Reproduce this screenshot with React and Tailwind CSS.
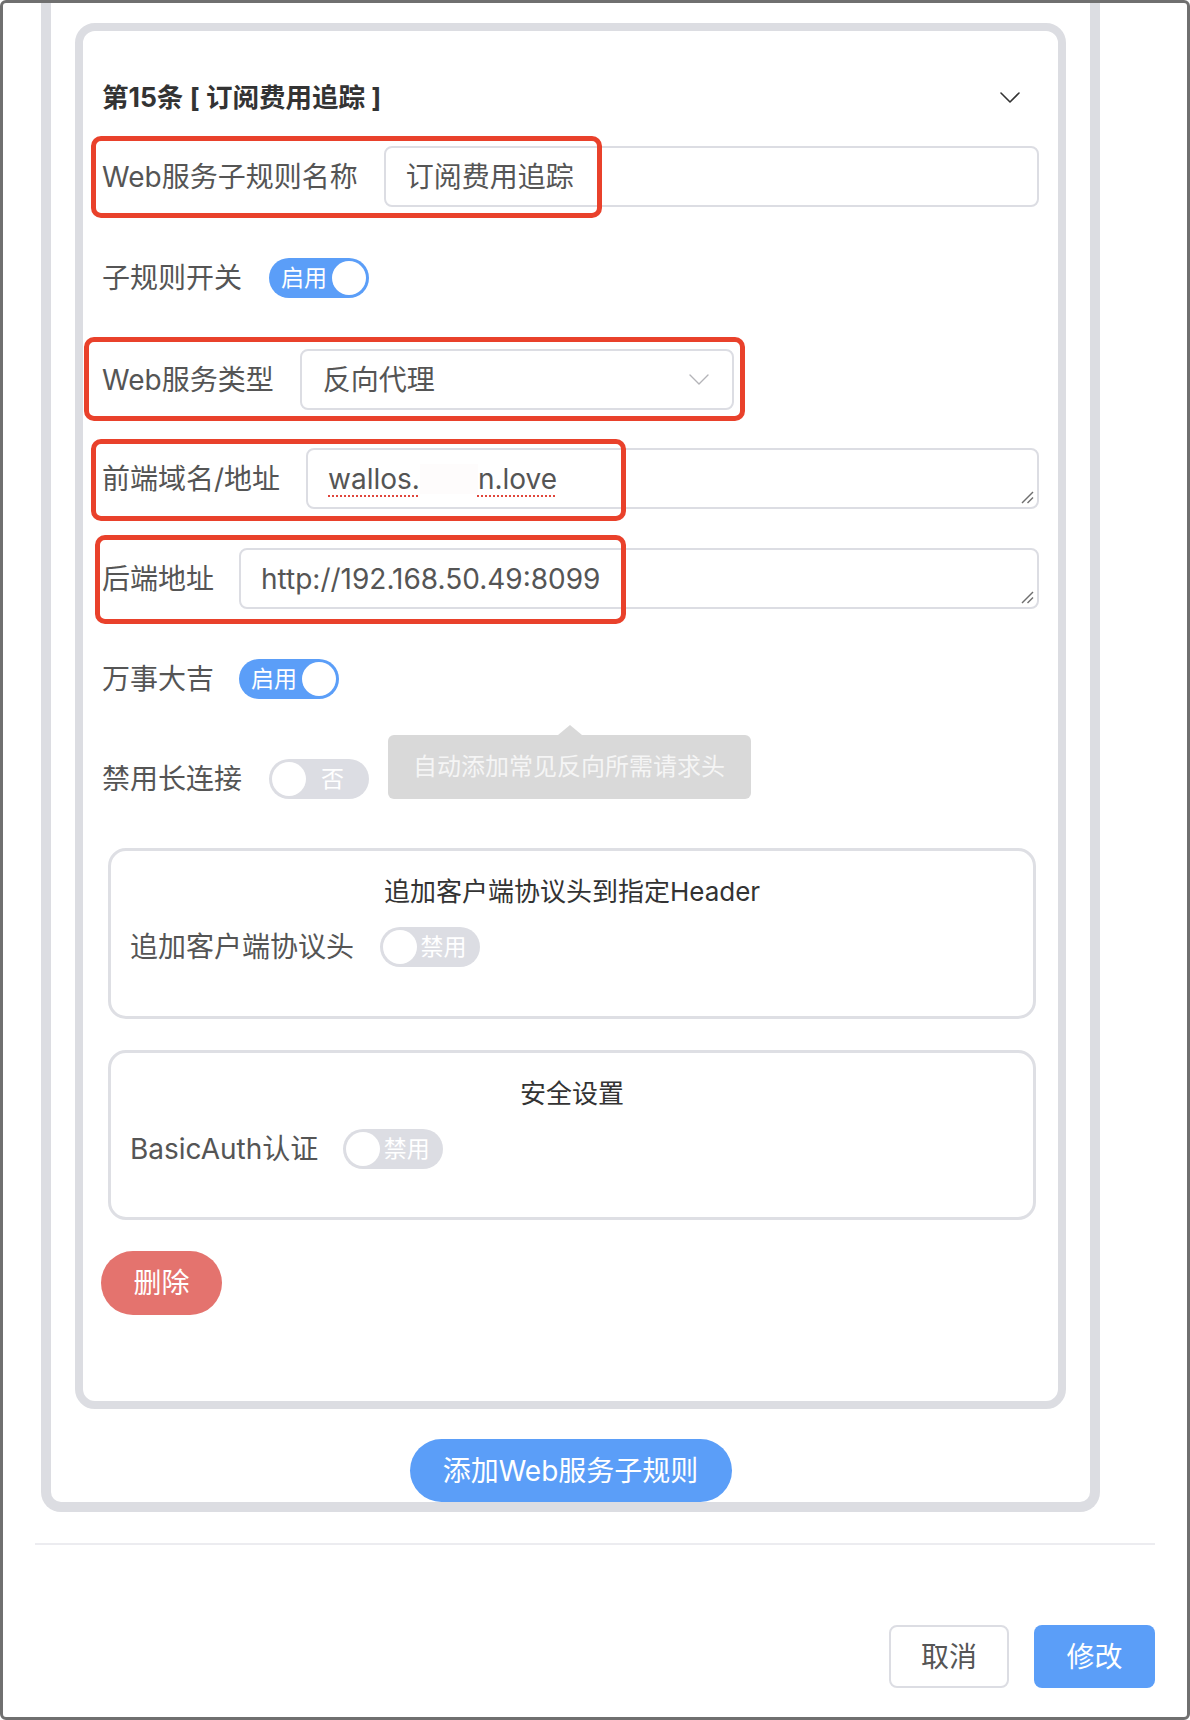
import React from "react";

function Chevron({ color = "#333", w = 20, h = 11, sw = 1.6 }) {
  return (
    <svg width={w} height={h} viewBox="0 0 20 11" fill="none">
      <polyline points="1,1 10,10 19,1" stroke={color} strokeWidth={sw} strokeLinecap="round" strokeLinejoin="round" />
    </svg>
  );
}

function Grip() {
  return (
    <svg className="absolute bottom-[3px] right-[3px]" width="13" height="13" viewBox="0 0 13 13" fill="none">
      <line x1="1" y1="12" x2="12" y2="1" stroke="#6f6f6f" strokeWidth="1.4" />
      <line x1="6.5" y1="12" x2="12" y2="6.5" stroke="#6f6f6f" strokeWidth="1.4" />
    </svg>
  );
}

function Toggle({ on, text }) {
  if (on) {
    return (
      <div className="flex h-[40px] w-[100px] shrink-0 items-center rounded-full bg-[#5b9ef8] p-[3px]">
        <span className="flex-1 pl-[4px] text-center text-[23px] leading-none text-white">{text}</span>
        <span className="h-[34px] w-[34px] rounded-full bg-white" />
      </div>
    );
  }
  return (
    <div className="flex h-[40px] w-[100px] shrink-0 items-center rounded-full bg-[#dcdde3] p-[3px]">
      <span className="h-[34px] w-[34px] rounded-full bg-white" />
      <span className="flex-1 pr-[7px] text-center text-[23px] leading-none text-white">{text}</span>
    </div>
  );
}

function Label({ children }) {
  return <span className="shrink-0 whitespace-nowrap text-[28px] leading-[40px] text-[#555]">{children}</span>;
}

function RedBox({ className }) {
  return <div className={"pointer-events-none absolute z-10 rounded-[10px] border-[5px] border-[#e9412b] " + className} />;
}

export default function App() {
  return (
    <div className="h-[1720px] w-[1190px] overflow-hidden rounded-[6px] border-[3px] border-[#707070] bg-white font-[family-name:Inter,'Noto_Sans_CJK_SC',sans-serif]">
      <div className="ml-[38px] w-[1059px] rounded-b-[20px] border-x-[10px] border-b-[10px] border-[#dcdde2] px-[24px] pt-[20px]">
        <div className="rounded-[20px] border-[8px] border-[#dcdde2] px-[19px] pb-[86px] pt-[46px]">
          {/* header */}
          <div className="flex h-[40px] items-center justify-between pr-[19px]">
            <span className="text-[26.5px] font-bold leading-none text-[#333]">第15条 [ 订阅费用追踪 ]</span>
            <Chevron />
          </div>

          {/* row 1 */}
          <div className="relative mt-[29px] flex items-center gap-[26px]">
            <RedBox className="-left-[11px] -top-[10px] h-[82px] w-[511px]" />
            <Label>Web服务子规则名称</Label>
            <div className="flex h-[61px] flex-1 items-center rounded-[8px] border-2 border-[#dcdde3] px-[20px] text-[28px] text-[#555]">
              订阅费用追踪
            </div>
          </div>

          {/* row 2 */}
          <div className="mt-[51px] flex h-[40px] items-center gap-[27px]">
            <Label>子规则开关</Label>
            <Toggle on text="启用" />
          </div>

          {/* row 3 */}
          <div className="relative mt-[51px] flex items-center gap-[26px]">
            <RedBox className="-left-[18px] -top-[12px] h-[84px] w-[661px]" />
            <Label>Web服务类型</Label>
            <div className="flex h-[61px] w-[434px] items-center justify-between rounded-[8px] border-2 border-[#dcdde3] pl-[21px] pr-[23px] text-[28px] text-[#555]">
              <span>反向代理</span>
              <Chevron color="#b4b4b8" sw={1.4} />
            </div>
          </div>

          {/* row 4 */}
          <div className="relative mt-[38px] flex items-center gap-[26px]">
            <RedBox className="-left-[11px] -top-[9px] h-[82px] w-[535px]" />
            <Label>前端域名/地址</Label>
            <div className="relative flex h-[61px] flex-1 items-center rounded-[8px] border-2 border-[#dcdde3] px-[20px] text-[28px] text-[#555]">
              <span className="underline decoration-[#e0463c] decoration-dotted decoration-2 underline-offset-[7px]">wallos.</span>
              <span className="inline-block h-[30px] w-[58px] bg-[#fefcfc]" />
              <span className="underline decoration-[#e0463c] decoration-dotted decoration-2 underline-offset-[7px]">n.love</span>
              <Grip />
            </div>
          </div>

          {/* row 5 */}
          <div className="relative mt-[39px] flex items-center gap-[25px]">
            <RedBox className="-left-[7px] -top-[13px] h-[89px] w-[531px]" />
            <Label>后端地址</Label>
            <div className="relative flex h-[61px] flex-1 items-center rounded-[8px] border-2 border-[#dcdde3] px-[20px] text-[28px] text-[#555]">
              http://192.168.50.49:8099
              <Grip />
            </div>
          </div>

          {/* row 6 */}
          <div className="mt-[50px] flex h-[40px] items-center gap-[25px]">
            <Label>万事大吉</Label>
            <Toggle on text="启用" />
          </div>

          {/* row 7 */}
          <div className="mt-[36px] flex items-end">
            <div className="flex h-[40px] items-center gap-[27px]">
              <Label>禁用长连接</Label>
              <Toggle text="否" />
            </div>
            <div className="relative ml-[19px] flex h-[64px] items-center rounded-[6px] bg-[#d9d9d9] pl-[25px] pr-[26px] text-[24px] text-[#f5f5f5]">
              <span className="absolute -top-[10px] left-[170px] h-0 w-0 border-x-[12px] border-b-[10px] border-x-transparent border-b-[#d9d9d9]" />
              自动添加常见反向所需请求头
            </div>
          </div>

          {/* box A */}
          <div className="ml-[6px] mr-[3px] mt-[49px] h-[171px] rounded-[18px] border-[3px] border-[#dedfe4] pt-[24px]">
            <div className="text-center text-[26px] leading-[34px] text-[#333]">追加客户端协议头到指定Header</div>
            <div className="mt-[18px] flex h-[40px] items-center gap-[26px] pl-[19px]">
              <Label>追加客户端协议头</Label>
              <Toggle text="禁用" />
            </div>
          </div>

          {/* box B */}
          <div className="ml-[6px] mr-[3px] mt-[31px] h-[170px] rounded-[18px] border-[3px] border-[#dedfe4] pt-[24px]">
            <div className="text-center text-[26px] leading-[34px] text-[#333]">安全设置</div>
            <div className="mt-[18px] flex h-[40px] items-center gap-[25px] pl-[19px]">
              <Label>BasicAuth认证</Label>
              <Toggle text="禁用" />
            </div>
          </div>

          {/* delete */}
          <button className="-ml-[1px] mt-[31px] flex h-[64px] w-[121px] items-center justify-center rounded-full bg-[#e4736e] text-[28px] text-white">
            删除
          </button>
        </div>

        <button className="mx-auto mt-[30px] flex h-[63px] w-[322px] items-center justify-center rounded-full bg-[#5b9ef8] text-[28px] text-white">
          添加Web服务子规则
        </button>
      </div>

      <div className="ml-[32px] mt-[31px] h-[2px] w-[1120px] bg-[#ececf0]" />

      <div className="mt-[80px] flex justify-end gap-[25px] pr-[32px]">
        <button className="flex h-[63px] w-[120px] items-center justify-center rounded-[8px] border-2 border-[#dcdde3] bg-white text-[28px] text-[#555]">
          取消
        </button>
        <button className="flex h-[63px] w-[121px] items-center justify-center rounded-[8px] bg-[#5b9ef8] text-[28px] text-white">
          修改
        </button>
      </div>
    </div>
  );
}
